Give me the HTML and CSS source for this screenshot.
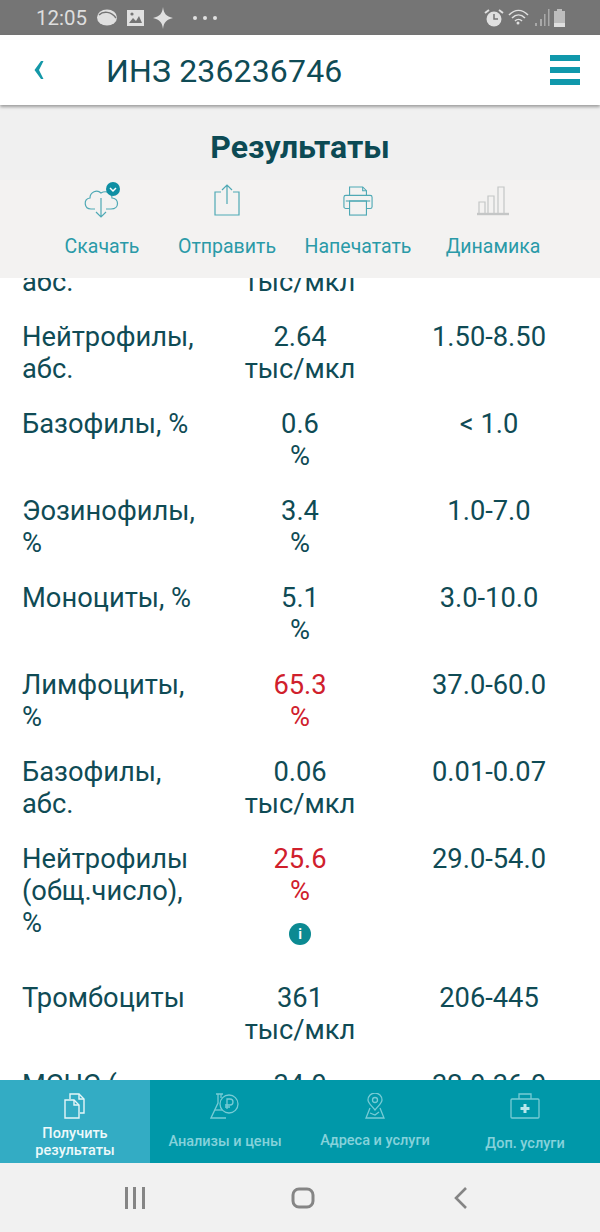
FILE: index.html
```html
<!DOCTYPE html>
<html lang="ru">
  <head>
    <meta charset="UTF-8" />
    <meta name="viewport" content="width=device-width, initial-scale=1.0" />
    <title>Результаты</title>
    <link rel="stylesheet" href="styles.css">
  </head>
  <body>
    <div class="phone">
      <div class="status-bar">
        <span class="clock">12:05</span>
        <svg class="st-icon" width="22" height="20" viewBox="0 0 22 20"><ellipse cx="11" cy="9.500" rx="10" ry="8" fill="#e0e0e0"/><path d="M3 7c4-4 12-4 17 3" stroke="#757575" stroke-width="1.500" fill="none"/></svg>
        <svg class="st-icon" width="20" height="20" viewBox="0 0 20 20"><rect x="2" y="2" width="17" height="16" fill="#e0e0e0"/><path d="M4 15l4-5 3 3 3-5 3 7z" fill="#757575"/><circle cx="7" cy="6" r="1.600" fill="#757575"/></svg>
        <svg class="st-icon" width="22" height="22" viewBox="0 0 22 22"><path d="M11 0c1 7 3 9 10 11-7 2-9 4-10 11-1-7-3-9-10-11 7-2 9-4 10-11z" fill="#e0e0e0"/></svg>
        <span class="dots"><i></i><i></i><i></i></span>
        <span class="st-right">
          <svg width="20" height="20" viewBox="0 0 20 20"><circle cx="10" cy="11" r="7.500" fill="#e0e0e0"/><path d="M10 6v5h4" stroke="#757575" stroke-width="1.500" fill="none"/><path d="M1 5l4-3M19 5l-4-3" stroke="#e0e0e0" stroke-width="2"/></svg>
          <svg width="24" height="20" viewBox="0 0 24 20"><path d="M2 7c6-6 13-6 19 0M5 10c4-4 9-4 13 0M8 13c2-2 5-2 7 0" stroke="#e0e0e0" stroke-width="1.600" fill="none"/><circle cx="11" cy="15" r="1.500" fill="#e0e0e0"/></svg>
          <svg width="16" height="20" viewBox="0 0 16 20"><path d="M1 15h2v3H1zM6 11h2v7H6zM10 6h1.500v12H10zM14 1h1.500v17H14z" fill="#a9a9a9"/></svg>
          <svg width="14" height="20" viewBox="0 0 14 20"><path d="M4 1h5v2h3v16H1V3h3z" fill="#bdbdbd"/><rect x="1" y="15" width="11" height="4" fill="#e0e0e0"/></svg>
        </span>
      </div>

      <header class="top-bar">
        <svg class="back" width="12" height="20" viewBox="0 0 12 20"><path d="M10.500 1H8L1.500 10 8 19h2.500L6 10z" fill="#1498a8"/></svg>
        <h1 class="top-title">ИНЗ 236236746</h1>
        <div class="burger"><i></i><i></i><i></i></div>
      </header>

      <h2 class="page-title">Результаты</h2>

      <div class="actions">
        <div class="action">
          <span class="action-icon">
            <svg width="38" height="38" viewBox="0 0 38 38" fill="none" stroke="#4fa9b5" stroke-width="1.200"><path d="M12 27H8c-7 0-8-10-1-11 0-6 7-9 11-5 5-3 11 0 11 5 7 0 8 11-1 11h-5"/><path d="M18 16v19M13 30l5 5 5-5"/><circle cx="30" cy="7" r="7" fill="#0f8fa3" stroke="none"/><path d="M27 6l3 3 3-3" stroke="#fff" stroke-width="1.500"/></svg>
          </span>
          <span class="action-label">Скачать</span>
        </div>
        <div class="action">
          <span class="action-icon">
            <svg width="30" height="34" viewBox="0 0 30 34" fill="none" stroke="#4fa9b5" stroke-width="1.200"><path d="M9 8H3v23h24V8h-6"/><path d="M15 20V1M10 6l5-5 5 5"/></svg>
          </span>
          <span class="action-label">Отправить</span>
        </div>
        <div class="action">
          <span class="action-icon">
            <svg width="30" height="32" viewBox="0 0 32 34" fill="none" stroke="#4fa9b5" stroke-width="1.200"><path d="M7 11V2h14l4 4v5"/><path d="M21 2v4h4"/><path d="M7 25H3c-1 0-2-1-2-2V13c0-1 1-2 2-2h26c1 0 2 1 2 2v10c0 1-1 2-2 2h-4"/><rect x="7" y="17" width="18" height="15"/><path d="M3 17h26"/></svg>
          </span>
          <span class="action-label">Напечатать</span>
        </div>
        <div class="action">
          <span class="action-icon">
            <svg width="34" height="32" viewBox="0 0 34 32" fill="none" stroke="#c4c6c6" stroke-width="1.200"><path d="M3 28V17h6v11M12 28V11h6v17M22 28V2h6v26"/><path d="M1 29h32" stroke-width="2.400"/></svg>
          </span>
          <span class="action-label">Динамика</span>
        </div>
      </div>

      <main class="results">
        <div class="result-list">
          <div class="row">
            <div class="name">абс.</div>
            <div class="value">тыс/мкл</div>
            <div class="norm"></div>
          </div>
          <div class="row">
            <div class="name">Нейтрофилы, абс.</div>
            <div class="value">2.64<br>тыс/мкл</div>
            <div class="norm">1.50-8.50</div>
          </div>
          <div class="row">
            <div class="name">Базофилы, %</div>
            <div class="value">0.6<br>%</div>
            <div class="norm">&lt; 1.0</div>
          </div>
          <div class="row">
            <div class="name">Эозинофилы, %</div>
            <div class="value">3.4<br>%</div>
            <div class="norm">1.0-7.0</div>
          </div>
          <div class="row">
            <div class="name">Моноциты, %</div>
            <div class="value">5.1<br>%</div>
            <div class="norm">3.0-10.0</div>
          </div>
          <div class="row">
            <div class="name">Лимфоциты, %</div>
            <div class="value high">65.3<br>%</div>
            <div class="norm">37.0-60.0</div>
          </div>
          <div class="row">
            <div class="name">Базофилы, абс.</div>
            <div class="value">0.06<br>тыс/мкл</div>
            <div class="norm">0.01-0.07</div>
          </div>
          <div class="row">
            <div class="name">Нейтрофилы (общ.число), %</div>
            <div class="value high">25.6<br>%<span class="info">i</span></div>
            <div class="norm">29.0-54.0</div>
          </div>
          <div class="row">
            <div class="name">Тромбоциты</div>
            <div class="value">361<br>тыс/мкл</div>
            <div class="norm">206-445</div>
          </div>
          <div class="row">
            <div class="name">МСНС (</div>
            <div class="value">34.0</div>
            <div class="norm">32.0-36.0</div>
          </div>
        </div>
      </main>

      <nav class="tabs">
        <a class="tab active">
          <svg width="24" height="26" viewBox="0 0 24 26" fill="none" stroke="#e6f6f8" stroke-width="1.400"><path d="M2 7h9l5 5v13H2z"/><path d="M11 7v5h5"/><path d="M7 6V1h9l5 5v14h-4"/><path d="M16 1v5h5"/></svg>
          <span class="tab-label">Получить<br>результаты</span>
        </a>
        <a class="tab">
          <svg width="30" height="26" viewBox="0 0 30 26" fill="none" stroke="#77cbd5" stroke-width="1.300"><path d="M6 1h7M8 1v9L1 25h15"/><path d="M11 1v4"/><circle cx="19" cy="11" r="9"/><path d="M17 16V6h3a3 3 0 0 1 0 6h-5M15 14h5"/><path d="M5 17h7"/></svg>
          <span class="tab-label tab-label-low">Анализы и цены</span>
        </a>
        <a class="tab">
          <svg width="20" height="26" viewBox="0 0 20 26" fill="none" stroke="#77cbd5" stroke-width="1.300"><path d="M10 17C6 12 3 10 3 7a7 7 0 0 1 14 0c0 3-3 5-7 10z"/><circle cx="10" cy="7" r="2.500"/><path d="M5 15L1 25h18l-4-10M5 20l5 2 4-3"/></svg>
          <span class="tab-label tab-label-mid">Адреса и услуги</span>
        </a>
        <a class="tab">
          <svg width="30" height="26" viewBox="0 0 30 26" fill="none" stroke="#77cbd5" stroke-width="1.300"><rect x="1" y="6" width="28" height="19" rx="1"/><path d="M9 6V1h12v5"/><path d="M15 11v9M10.500 15.500h9" stroke="#b8e6ec" stroke-width="3"/></svg>
          <span class="tab-label tab-label-end">Доп. услуги</span>
        </a>
      </nav>

      <div class="sys-nav">
        <svg width="24" height="22" viewBox="0 0 24 22" fill="#858585"><rect x="2" y="0" width="3" height="22"/><rect x="10" y="0" width="3" height="22"/><rect x="19" y="0" width="3" height="22"/></svg>
        <svg width="24" height="22" viewBox="0 0 24 22" fill="none" stroke="#858585" stroke-width="3"><rect x="2" y="2" width="20" height="18" rx="6"/></svg>
        <svg width="14" height="24" viewBox="0 0 14 24" fill="none" stroke="#858585" stroke-width="2.600"><path d="M12 2L2 12l10 10"/></svg>
      </div>
    </div>
  </body>
</html>
```

FILE: styles.css
```css
* {
  box-sizing: border-box;
}

body {
  margin: 0;
  font-family: Roboto, "Noto Sans", sans-serif;
  background-color: #fff;
}

.phone {
  width: 600px;
  height: 1232px;
  display: flex;
  flex-direction: column;
  overflow: hidden;
}

/* status bar */
.status-bar {
  height: 35px;
  flex: none;
  display: flex;
  align-items: center;
  gap: 7px;
  padding: 0 36px;
  background-color: #757575;
  color: #dedede;
}

.clock {
  font-size: 20.5px;
  margin-right: 2px;
}

.dots {
  display: flex;
  gap: 6px;
  margin-left: 12px;
}

.dots i {
  width: 4px;
  height: 4px;
  border-radius: 50%;
  background-color: #e0e0e0;
}

.st-right {
  margin-left: auto;
  display: flex;
  align-items: center;
  gap: 3px;
  margin-right: -3px;
}

/* header */
.top-bar {
  height: 70px;
  flex: none;
  display: flex;
  align-items: center;
  padding: 0 20px 0 33px;
  background-color: white;
  box-shadow: 0 2px 3px rgba(0, 0, 0, 0.35);
  position: relative;
}

.top-title {
  margin: 2px 0 0 61px;
  font-size: 32px;
  font-weight: 400;
  letter-spacing: 0.15px;
  color: #0f4b55;
}

.burger {
  margin-left: auto;
  display: flex;
  flex-direction: column;
  gap: 6px;
}

.burger i {
  width: 30px;
  height: 6px;
  background-color: #1098ab;
}

.page-title {
  margin: 0;
  height: 75px;
  flex: none;
  line-height: 85px;
  text-align: center;
  font-size: 32px;
  font-weight: 700;
  color: #0c4a54;
  background-color: #f0f0f0;
}

/* action buttons */
.actions {
  height: 98px;
  flex: none;
  display: grid;
  grid-template-columns: 124px 126px 136px 134px;
  padding-left: 40px;
  background-color: #f3f2f1;
}

.action {
  display: flex;
  flex-direction: column;
  align-items: center;
}

.action-icon {
  height: 42px;
  display: flex;
  align-items: center;
  justify-content: center;
}

.action-label {
  margin-top: 13px;
  font-size: 19.500px;
  line-height: 24px;
  color: #2a9aa8;
}

/* result list */
.results {
  flex: 1;
  min-height: 0;
  overflow: hidden;
  background-color: white;
}

.result-list {
  margin-top: -12px;
}

.row {
  display: grid;
  grid-template-columns: 183px 190px 188px;
  padding: 0 17px 23px 22px;
  font-size: 27.300px;
  line-height: 32px;
  color: #0f4b55;
}

.value,
.norm {
  text-align: center;
}

.value.high {
  color: #d0202c;
}

.info {
  display: block;
  width: 22px;
  height: 22px;
  margin: 16px auto 14px;
  border-radius: 50%;
  background-color: #0c8a92;
  color: white;
  font-size: 14px;
  font-weight: 700;
  line-height: 22px;
}

/* bottom tabs */
.tabs {
  height: 83px;
  flex: none;
  display: grid;
  grid-template-columns: repeat(4, 150px);
  background-color: #0098a9;
}

.tab {
  display: flex;
  flex-direction: column;
  align-items: center;
  padding-top: 13px;
  color: #86d2db;
  font-size: 14.500px;
  font-weight: 500;
  text-align: center;
}

.tab.active {
  background-color: #33acc4;
  color: #eef9fa;
}

.tab-label {
  margin-top: 6px;
  line-height: 17px;
}

.tab-label-low {
  margin-top: 14px;
}

.tab-label-mid {
  margin-top: 13px;
}

.tab-label-end {
  margin-top: 16px;
}

/* android nav */
.sys-nav {
  height: 69px;
  flex: none;
  display: grid;
  grid-template-columns: 123px 24px 144px 24px 139px 14px;
  align-items: center;
  background-color: #f1f1f1;
}

.sys-nav svg:nth-child(1) {
  grid-column: 2;
}

.sys-nav svg:nth-child(2) {
  grid-column: 4;
}

.sys-nav svg:nth-child(3) {
  grid-column: 6;
}
```
